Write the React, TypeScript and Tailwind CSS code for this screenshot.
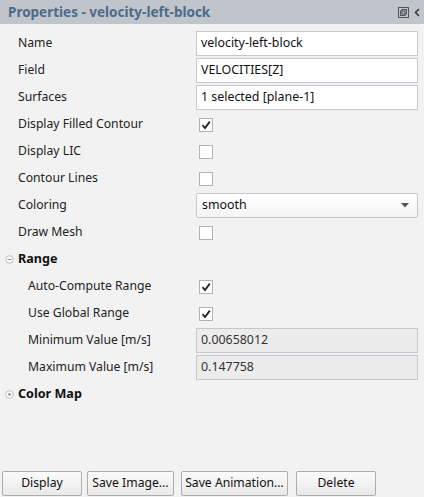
import React from 'react';

const font = { fontFamily: '"Segoe UI", "Noto Sans", "Open Sans", sans-serif' };

function Check({ checked }: { checked?: boolean }) {
  return (
    <div className="w-[14px] h-[14px] border border-[#b4b4b4] bg-white flex items-center justify-center ml-[3px]">
      {checked && (
        <svg width="10" height="10" viewBox="0 0 10 10">
          <path d="M1.5 5.2 L4 8 L8.8 1.6" stroke="#222" strokeWidth="1.8" fill="none" />
        </svg>
      )}
    </div>
  );
}

function TextBox({ value, ro }: { value: string; ro?: boolean }) {
  return (
    <div
      className={`h-[25px] w-[222px] border border-[#c5c9cd] px-[4px] flex items-center text-[12.4px] ${ro ? 'bg-[#ececec] text-[#333]' : 'bg-white text-[#111]'}`}
    >
      {value}
    </div>
  );
}

function Row({ label, indent, children }: { label: string; indent?: boolean; children?: React.ReactNode }) {
  return (
    <div className="h-[27px] flex items-center">
      <div className={`${indent ? 'pl-[28px]' : 'pl-[18px]'} w-[196px] text-[12.2px] text-[#222]`}>{label}</div>
      {children}
    </div>
  );
}

function Section({ label, open }: { label: string; open?: boolean }) {
  return (
    <div className="h-[27px] flex items-center">
      <div className="w-[18px] flex justify-center">
        <svg width="9" height="9" viewBox="0 0 9 9">
          <circle cx="4.5" cy="4.5" r="3.8" fill="#fff" stroke="#b8b8b8" strokeWidth="0.9" />
          {open ? (
            <path d="M2.6 4.5 H6.4" stroke="#8a8a8a" strokeWidth="1" />
          ) : (
            <circle cx="4.5" cy="4.5" r="1.4" fill="#9a9a9a" />
          )}
        </svg>
      </div>
      <div className="text-[12.6px] font-bold text-[#111]">{label}</div>
    </div>
  );
}

function Btn({ label, w }: { label: string; w: string }) {
  return (
    <div
      className={`${w} shrink-0 h-[25px] border border-[#acacac] rounded-[2px] bg-gradient-to-b from-[#fbfbfb] to-[#e9e9e9] flex items-center justify-center text-[12.2px] text-[#111] whitespace-nowrap`}
    >
      {label}
    </div>
  );
}

export default function App() {
  return (
    <div className="w-[424px] h-[497px] bg-[#f2f2f2] flex flex-col overflow-hidden" style={font}>
      <div className="h-[24px] bg-[#bfc5cb] flex items-center justify-between pl-[8px] pr-[4px] shrink-0">
        <div className="text-[13.5px] font-bold text-[#4d6a89]">Properties - velocity-left-block</div>
        <div className="flex items-center gap-[5px]">
          <svg width="11" height="11" viewBox="0 0 11 11">
            <rect x="0.5" y="0.5" width="10" height="10" fill="none" stroke="#555" strokeWidth="1" />
            <rect x="4" y="2.5" width="4.5" height="4.5" fill="none" stroke="#555" strokeWidth="1" />
            <rect x="2.5" y="4" width="4.5" height="4.5" fill="none" stroke="#555" strokeWidth="1" />
          </svg>
          <svg width="6" height="9" viewBox="0 0 6 9">
            <path d="M5 1 L1.5 4.5 L5 8" stroke="#333" strokeWidth="1.5" fill="none" />
          </svg>
        </div>
      </div>

      <div className="pt-[6px] flex flex-col">
        <Row label="Name"><TextBox value="velocity-left-block" /></Row>
        <Row label="Field"><TextBox value="VELOCITIES[Z]" /></Row>
        <Row label="Surfaces"><TextBox value="1 selected [plane-1]" /></Row>
        <Row label="Display Filled Contour"><Check checked /></Row>
        <Row label="Display LIC"><Check /></Row>
        <Row label="Contour Lines"><Check /></Row>
        <Row label="Coloring">
          <div className="h-[25px] w-[222px] border border-[#c5c9cd] rounded-[2px] bg-gradient-to-b from-white to-[#f4f4f4] pl-[5px] pr-[8px] flex items-center justify-between text-[12.4px] text-[#111]">
            <span>smooth</span>
            <svg width="8" height="5" viewBox="0 0 8 5">
              <path d="M0 0 H8 L4 4.5 Z" fill="#555" />
            </svg>
          </div>
        </Row>
        <Row label="Draw Mesh"><Check /></Row>
        <Section label="Range" open />
        <Row label="Auto-Compute Range" indent><Check checked /></Row>
        <Row label="Use Global Range" indent><Check checked /></Row>
        <Row label="Minimum Value [m/s]" indent><TextBox value="0.00658012" ro /></Row>
        <Row label="Maximum Value [m/s]" indent><TextBox value="0.147758" ro /></Row>
        <Section label="Color Map" />
      </div>

      <div className="flex-1" />

      <div className="flex items-center pl-[2px] pb-[1px]">
        <Btn label="Display" w="w-[80px]" />
        <div className="w-[5px] shrink-0" />
        <Btn label="Save Image..." w="w-[87px]" />
        <div className="w-[7px] shrink-0" />
        <Btn label="Save Animation..." w="w-[107px]" />
        <div className="w-[8px] shrink-0" />
        <Btn label="Delete" w="w-[80px]" />
      </div>
    </div>
  );
}
